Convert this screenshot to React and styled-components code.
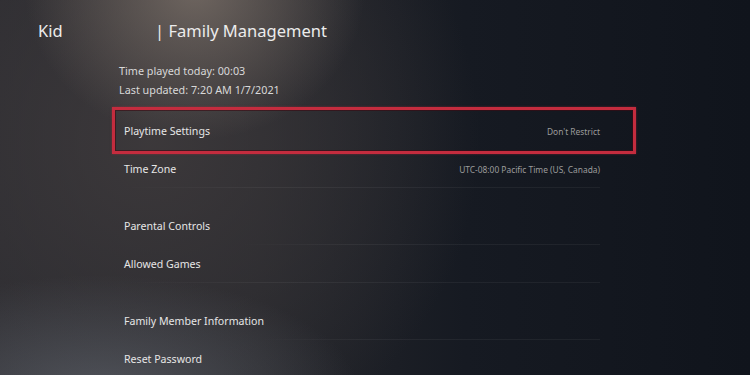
import React from 'react'
import styled, { createGlobalStyle } from 'styled-components'

const GlobalStyle = createGlobalStyle`
  html, body {
    margin: 0;
    padding: 0;
    background: #11151c;
  }
  * {
    box-sizing: border-box;
  }
`

const Screen = styled.div`
  position: relative;
  width: 750px;
  height: 375px;
  overflow: hidden;
  font-family: "Noto Sans", "Open Sans", sans-serif;
  color: #e8e8e8;
  background:
    radial-gradient(ellipse 170px 150px at 195px -10px, rgba(125, 114, 106, 0.8), rgba(125, 114, 106, 0) 100%),
    radial-gradient(ellipse 260px 120px at 100px 395px, rgba(92, 96, 104, 0.75), rgba(92, 96, 104, 0) 100%),
    radial-gradient(ellipse 330px 330px at 150px 140px, rgba(62, 58, 60, 0.9), rgba(62, 58, 60, 0) 100%),
    linear-gradient(90deg, #2b2b30 0%, #25262b 35%, #161a22 62%, #10141c 100%);
`

const Header = styled.header`
  display: flex;
  align-items: center;
  height: 24px;
  margin-top: 19px;
  padding-left: 38px;
  font-size: 16.5px;
  line-height: 24px;
  color: #ececec;
`

const UserName = styled.span`
  width: 117px;
`

const PageTitle = styled.span``

const Body = styled.main`
  padding-left: 119px;
  margin-top: 18px;
`

const Info = styled.div`
  display: flex;
  flex-direction: column;
  font-size: 10.8px;
  line-height: 19px;
  color: #d8d8d8;
`

const List = styled.div`
  margin-top: 13px;
  margin-left: 5px;
  width: 476px;
  display: flex;
  flex-direction: column;
`

const Group = styled.div`
  display: flex;
  flex-direction: column;
  & + & {
    margin-top: 19px;
  }
`

const Row = styled.div`
  position: relative;
  display: flex;
  align-items: center;
  justify-content: space-between;
  height: 38px;
  ${p => p.$line && `
    &::before {
      content: '';
      position: absolute;
      left: ${p.$lineFrom || 0}px;
      right: 0;
      bottom: 0;
      height: 1px;
      background: linear-gradient(90deg, rgba(255, 255, 255, 0), rgba(255, 255, 255, 0.05) 30%, rgba(255, 255, 255, 0.05));
    }
  `}
  ${p => p.$focused && `
    &::after {
      content: '';
      position: absolute;
      top: -5px;
      bottom: -4px;
      left: -12px;
      right: -36px;
      border: 3px solid #c42c3e;
      box-shadow: inset 0 0 0 1px rgba(60, 10, 18, 0.6), 0 0 2px rgba(195, 40, 59, 0.5);
    }
  `}
`

const Label = styled.span`
  font-size: 10.6px;
  color: #e6e6e6;
`

const Value = styled.span`
  font-size: 8.4px;
  color: #9c9c9c;
`

const groups = [
  [
    { label: 'Playtime Settings', value: "Don't Restrict", focused: true },
    { label: 'Time Zone', value: 'UTC-08:00 Pacific Time (US, Canada)', line: true }
  ],
  [
    { label: 'Parental Controls', line: true, lineFrom: 116 },
    { label: 'Allowed Games', line: true }
  ],
  [
    { label: 'Family Member Information', line: true, lineFrom: 136 },
    { label: 'Reset Password' }
  ]
]

const App = () => (
  <Screen>
    <GlobalStyle />
    <Header>
      <UserName>Kid</UserName>
      <PageTitle>| Family Management</PageTitle>
    </Header>
    <Body>
      <Info>
        <span>Time played today: 00:03</span>
        <span>Last updated: 7:20 AM 1/7/2021</span>
      </Info>
      <List>
        {groups.map((rows, i) => (
          <Group key={i}>
            {rows.map(r => (
              <Row key={r.label} $focused={r.focused} $line={r.line} $lineFrom={r.lineFrom}>
                <Label>{r.label}</Label>
                {r.value && <Value>{r.value}</Value>}
              </Row>
            ))}
          </Group>
        ))}
      </List>
    </Body>
  </Screen>
)

export default App
